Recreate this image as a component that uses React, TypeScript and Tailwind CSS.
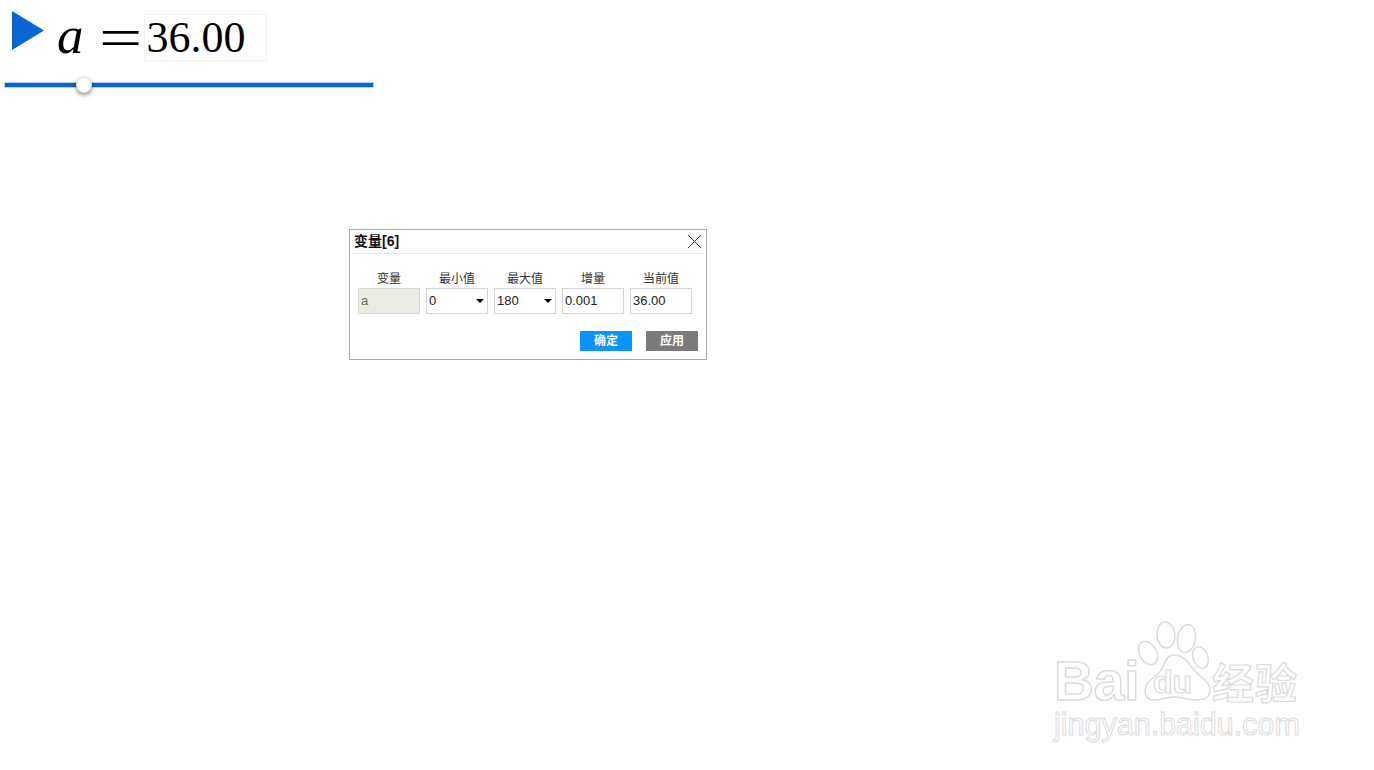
const fields = [
  { label: "变量", value: "a", disabled: true },
  { label: "最小值", value: "0", select: true },
  { label: "最大值", value: "180", select: true },
  { label: "增量", value: "0.001" },
  { label: "当前值", value: "36.00" },
];

function Field({ label, value, disabled, select }: { label: string; value: string; disabled?: boolean; select?: boolean }) {
  return (
    <div className="flex w-[62px] flex-col">
      <div className="h-[18px] text-center text-[12px] leading-[18px] text-[#333]">{label}</div>
      <div
        className={
          disabled
            ? "flex h-[26px] items-center justify-between border border-[#d8d8d2] bg-[#ebebe4] px-[2px] text-[13px] text-[#666]"
            : "flex h-[26px] items-center justify-between border border-[#d4d4d4] bg-white px-[2px] text-[13px] text-[#222]"
        }
      >
        <span>{value}</span>
        {select && <span className="mr-[1px] h-0 w-0 border-x-[4px] border-t-[4px] border-x-transparent border-t-black" />}
      </div>
    </div>
  );
}

function Watermark() {
  const stroke = "#dcdcdc";
  return (
    <div className="absolute left-[1052px] top-[620px] h-[122px] w-[252px] font-['Liberation_Sans',sans-serif]">
      <div className="absolute left-[2px] top-[28px] text-[55px] font-bold leading-[66px] text-white [-webkit-text-stroke:1.5px_#dcdcdc]">
        Bai
      </div>
      <svg className="absolute left-0 top-0" width="252" height="90" viewBox="0 0 252 90" fill="white" stroke={stroke} strokeWidth="1.5">
        <ellipse cx="96" cy="33" rx="8.5" ry="12.5" transform="rotate(-30 96 33)" />
        <ellipse cx="114" cy="15" rx="9" ry="13" transform="rotate(-5 114 15)" />
        <ellipse cx="134.5" cy="18.5" rx="9" ry="14" transform="rotate(10 134.5 18.5)" />
        <ellipse cx="148.5" cy="37.5" rx="7.5" ry="11" transform="rotate(-20 148.5 37.5)" />
        <path d="M122 35c12 0 16 12 24 19c6 5 12 10 12 16c0 7-6 10-14 10c-8 0-14-3-22-3s-14 3-20 3c-6 0-9-3-9-9c0-8 7-12 13-17c7-6 6-19 16-19z" />
      </svg>
      <div className="absolute left-[101px] top-[42px] text-[32px] font-bold leading-[40px] text-white [-webkit-text-stroke:1.2px_#dcdcdc]">
        du
      </div>
      <div className="absolute left-[160px] top-[36px] font-['Noto_Sans_CJK_SC',sans-serif] text-[42px] font-bold leading-[50px] tracking-[1px] text-white [-webkit-text-stroke:1.2px_#dcdcdc]">
        经验
      </div>
      <div className="absolute left-[2px] top-[86px] text-[30.5px] leading-[36px] text-white [-webkit-text-stroke:1px_#dcdcdc]">
        jingyan.baidu.com
      </div>
    </div>
  );
}

export default function App() {
  return (
    <div className="relative h-[770px] w-[1374px] overflow-hidden bg-white font-['Liberation_Sans','Noto_Sans_CJK_SC',sans-serif]">
      <div className="absolute left-[4px] top-[11px] w-[370px]">
        <div className="flex h-[50px] items-start">
          <svg className="ml-[8px] shrink-0" width="32" height="39" viewBox="0 0 32 39">
            <path d="M0 0L32 19.5L0 39Z" fill="#0866d1" />
          </svg>
          <span className="ml-[13px] mt-[-6px] font-['Liberation_Serif',serif] text-[53px] italic leading-[60px] text-black">a</span>
          <span className="ml-[15px] mt-[-3px] w-[27px] origin-left scale-x-[1.37] font-['Liberation_Serif',serif] text-[56px] leading-[60px] text-black">=</span>
          <div className="ml-[18px] mt-[3px] h-[47px] w-[123px] border border-[#f3f3f3] pl-[2px] font-['Liberation_Serif',serif] text-[44px] leading-[46px] text-black">
            36.00
          </div>
        </div>
        <div className="relative mt-[21px] h-[6px] w-[370px] border border-[#b5cfe9] bg-[#0866d1]">
          <div className="absolute left-[71px] top-[-6px] h-[16px] w-[16px] rounded-full border border-[#e4e4e4] bg-white shadow-[0_2px_4px_rgba(0,0,0,0.45)]" />
        </div>
      </div>

      <div className="absolute left-[349px] top-[229px] flex h-[131px] w-[358px] flex-col border border-[#aaaaaa] bg-white">
        <div className="mx-[3px] flex h-[24px] items-center justify-between border-b border-[#e3e6ee] pl-[1px]">
          <span className="text-[14px] font-bold text-[#111]">变量[6]</span>
          <svg className="mr-[1px]" width="15" height="15" viewBox="0 0 15 15" stroke="#333" strokeWidth="1" fill="none">
            <path d="M1 1L14 14M14 1L1 14" />
          </svg>
        </div>
        <div className="ml-[8px] mt-[16px] flex gap-[6px]">
          {fields.map((f) => (
            <Field key={f.label} {...f} />
          ))}
        </div>
        <div className="mr-[8px] mt-[17px] flex justify-end gap-[14px]">
          <div className="flex h-[20px] w-[52px] items-center justify-center bg-[#0a94ff] text-[12px] font-bold text-white">确定</div>
          <div className="flex h-[20px] w-[52px] items-center justify-center bg-[#7b7b7b] text-[12px] font-bold text-white">应用</div>
        </div>
      </div>

      <Watermark />
    </div>
  );
}
